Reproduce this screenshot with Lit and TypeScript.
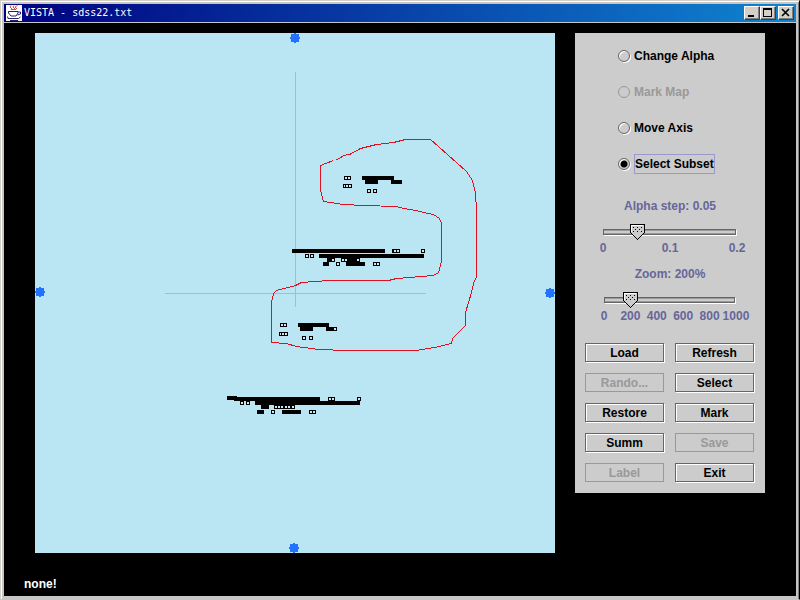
import { LitElement, html, svg, css } from "lit";
import { customElement } from "lit/decorators.js";
import { styleMap } from "lit/directives/style-map.js";

// Solid runs of overlapping points: x, y, width
const RUNS = [
  [362, 176, 32], [365, 180, 13], [391, 180, 11],
  [292, 249, 93], [319, 254, 105], [327, 258, 6], [347, 258, 10],
  [323, 262, 6], [346, 262, 19],
  [298, 323, 31], [300, 327, 13], [326, 327, 8],
  [227, 396, 10], [234, 397, 86], [255, 401, 105], [261, 405, 8],
  [257, 410, 7], [282, 410, 19],
];

// Single points, drawn hollow: x, y
const POINTS = [
  [344, 176], [347, 176], [343, 184], [345, 184], [348, 184], [367, 189], [373, 189],
  [392, 249], [393, 249], [396, 249], [421, 249], [305, 254], [310, 254],
  [331, 258], [341, 258], [344, 258], [356, 258], [336, 262], [373, 262], [376, 262],
  [280, 323], [283, 323], [279, 332], [281, 332], [284, 332], [333, 327],
  [302, 336], [309, 336],
  [328, 397], [331, 397], [357, 397], [240, 401], [246, 401],
  [274, 405], [277, 405], [280, 405], [284, 405], [287, 405], [291, 405],
  [271, 410], [309, 410], [312, 410],
];

const HANDLES = [[295, 38], [40, 292], [550, 293], [294, 548]];

const LASSO =
  "M336 159L339 158L343 155L349 154L360 148L376 144L393 142L405 139H430L447 154L466 171L472 180L475 192L476 210V277L474 280L469 299L465 312V325L452 338L451 343L434 347L415 350H346L318 349L296 346L286 343L271 342V302L273 293L276 290L295 285L301 282L329 280H388L396 278L433 275L438 272L441 261V223L439 218L433 214L423 212L416 210L403 208L396 206L363 205L343 204L323 201L320 190V165L333 160";

@customElement("scatter-plot")
export class ScatterPlot extends LitElement {
  static styles = css`
    :host { display: block; }
    .plot { display: block; width: 100%; height: auto; background: #b9e6f2; }
    .axis { fill: #40ff80; }
    .lasso { fill: none; stroke: #e01020; stroke-width: 1; }
    .point { fill: #c8ecf5; stroke: #000; stroke-width: 1; }
    .handle { fill: #2273ff; }
  `;
  render() {
    return html`<svg class="plot" viewBox="35 33 520 520" role="img" aria-label="Data map" shape-rendering="crispEdges">
      <rect class="axis" x="295" y="72" width="1" height="235" />
      <rect class="axis" x="165" y="293" width="261" height="1" />
      <path class="lasso" transform="translate(.5 .5)" d=${LASSO} />
      ${RUNS.map(([x, y, w]) => svg`<rect x=${x} y=${y} width=${w} height="4" />`)}
      ${POINTS.map(([x, y]) => svg`<rect class="point" x=${x + 0.5} y=${y + 0.5} width="3" height="3" />`)}
      ${HANDLES.map(([x, y]) => svg`<path class="handle" transform="translate(${x} ${y})"
        d="M-4-4H-1V-5H1V-4H4V-1H5V1H4V4H1V5H-1V4H-4V1H-5V-1H-4Z" />`)}
    </svg>`;
  }
}

@customElement("metal-slider")
export class MetalSlider extends LitElement {
  static properties = {
    name: {}, unit: {}, max: { type: Number }, step: { type: Number },
    value: { type: Number }, ticks: { attribute: false },
  };
  declare name: string;
  declare unit: string;
  declare max: number;
  declare step: number;
  declare value: number;
  declare ticks: number[];

  static styles = css`
    :host { display: block; color: #666699; }
    .caption { display: block; text-align: center; line-height: 16px; margin-bottom: 10px; }
    .slider { position: relative; height: 16px; display: flex; align-items: center; }
    .range { appearance: none; width: 100%; height: 16px; margin: 0; background: none; outline: none; }
    .range::-webkit-slider-runnable-track {
      height: 6px; margin-right: 1px; box-sizing: border-box; border: 1px solid #666;
      box-shadow: 1px 1px 0 #fff, inset 0 -1px 0 #999, inset 0 1px 0 #999;
    }
    .range::-webkit-slider-thumb { appearance: none; width: 15px; height: 16px; margin-top: -6px; opacity: 0; }
    .thumb { position: absolute; top: 0; width: 15px; height: 16px; margin-left: -7px; pointer-events: none; }
    .ticks { display: flex; justify-content: space-between; line-height: 16px; }
    .tick { width: 0; display: flex; justify-content: center; }
  `;
  render() {
    return html`
      <label class="caption" for="range">${this.name}: ${this.value}${this.unit}</label>
      <div class="slider">
        <input class="range" id="range" type="range" min="0" max=${this.max} step=${this.step} .value=${String(this.value)}
          @input=${(e: Event) => { this.value = Number((e.target as HTMLInputElement).value); }} />
        <svg class="thumb" style=${styleMap({ left: `${(this.value / this.max) * 100}%` })} viewBox="0 0 15 16" shape-rendering="crispEdges">
          <path d="M1 .5H14L14.5 1V8.5L7.5 15.5L.5 8.5V1Z" fill="#ccc" stroke="#000" />
          <path d="M1.5 8V1.5H13" fill="none" stroke="#fff" />
          <path d="M3 3h1v1h-1zM7 3h1v1h-1zM11 3h1v1h-1zM5 5h1v1h-1zM9 5h1v1h-1zM3 7h1v1h-1zM7 7h1v1h-1zM11 7h1v1h-1z" fill="#000" />
        </svg>
      </div>
      <div class="ticks">${this.ticks.map((t) => html`<span class="tick">${t}</span>`)}</div>`;
  }
}

@customElement("app-root")
export class AppRoot extends LitElement {
  static properties = { mode: { state: true } };
  declare mode: string;
  constructor() {
    super();
    this.mode = "Select Subset";
  }

  static styles = css`
    :host { display: block; font: bold 12px "Liberation Sans", Arial, sans-serif; }
    .window {
      box-sizing: border-box; min-height: 100vh; display: flex; flex-direction: column;
      padding: 3px; background: #c6c6c6; border: 1px solid; border-color: #d4d0c8 #000 #c6c6c6 #d4d0c8;
      box-shadow: inset 1px 1px 0 #fff, inset -1px 0 0 #808080;
    }
    .titlebar {
      display: flex; align-items: center; height: 18px; padding: 0 2px; margin-bottom: 1px;
      background: linear-gradient(90deg, #000080, #1084d0);
    }
    .logo { width: 16px; height: 16px; flex: none; }
    .title { flex: 1; margin: 0 0 0 2px; font: 10px/16px "DejaVu Sans Mono", monospace; color: #fff; white-space: pre; }
    .caption-button {
      box-sizing: border-box; width: 16px; height: 14px; padding: 0; border: 1px solid;
      border-color: #fff #404040 #404040 #fff; background: #d4d0c8; box-shadow: inset -1px -1px 0 #808080;
    }
    .close { margin-left: 2px; }
    .glyph { display: block; width: 14px; height: 12px; fill: none; stroke: #000; }
    .client { flex: 1; background: #000; }
    .workspace { display: flex; align-items: flex-start; gap: 20px; padding: 10px 31px 0; }
    .map { flex: 1; min-width: 0; }
    .panel { box-sizing: border-box; width: 190px; flex: none; padding: 13px 10px 10px; background: #ccc; }
    .modes { display: grid; gap: 16px; margin: 0; padding: 0 0 0 33px; border: 0; }
    .mode { display: flex; align-items: center; gap: 4px; height: 20px; }
    .radio {
      appearance: none; box-sizing: border-box; width: 12px; height: 12px; margin: 0; border: 1px solid #666;
      border-radius: 50%; box-shadow: 1px 1px 0 #fff, inset 1px 1px 0 #fff; outline: none;
    }
    .radio:checked { background: radial-gradient(circle, #000 0 3px, transparent 4px); }
    .radio:disabled { border-color: #999; box-shadow: none; }
    .mode-name { border: 1px solid transparent; line-height: 18px; margin-left: -1px; white-space: nowrap; }
    .radio:checked + .mode-name { border-color: #9999cc; margin-left: 0; }
    .radio:disabled + .mode-name { color: #999; }
    .sliders { display: grid; gap: 10px; padding: 24px 18px 19px; }
    .inner { margin: 0 1px; }
    .actions { display: grid; grid-template-columns: 1fr 1fr; gap: 10px; }
    .action {
      box-sizing: border-box; height: 19px; margin: 0 1px 1px 0; padding: 0; border: 1px solid #666;
      background: #ccc; box-shadow: 1px 1px 0 #fff, inset 1px 1px 0 #fff; font: inherit; line-height: 16px; color: #000;
    }
    .action:disabled { color: #999; border-color: #999; box-shadow: none; }
    .status { margin: 0; padding: 23px 20px 4px; line-height: 16px; color: #fff; }
  `;

  private modeItem(name: string, disabled = false) {
    return html`<label class="mode">
      <input class="radio" type="radio" name="mode" ?disabled=${disabled} .checked=${this.mode === name}
        @change=${() => { this.mode = name; }} /><span class="mode-name">${name}</span></label>`;
  }

  private action(name: string, disabled = false) {
    return html`<button class="action" type="button" ?disabled=${disabled}>${name}</button>`;
  }

  render() {
    return html`<div class="window">
      <header class="titlebar">
        <svg class="logo" viewBox="0 0 16 16" aria-hidden="true">
          <rect width="16" height="16" fill="#fff" />
          <path d="M5 .5L4 2L6 4M8 .5L7 2L9 4M11.5 .5L9 2L11 4M5 4.5H10" fill="none" stroke="#d84848" />
          <path d="M2.5 6.5H12V8L10 11H5L2.5 8ZM12 7H14.5V9L11.5 10M1.5 11.5L2 13.5H12.5L14.5 12M4 15.5H12" fill="none" stroke="#22226c" />
        </svg>
        <h1 class="title">VISTA - sdss22.txt</h1>
        <button class="caption-button" type="button" aria-label="Minimize">
          <svg class="glyph" viewBox="0 0 14 12" shape-rendering="crispEdges"><path d="M3 9H9" stroke-width="2" /></svg>
        </button>
        <button class="caption-button" type="button" aria-label="Maximize">
          <svg class="glyph" viewBox="0 0 14 12" shape-rendering="crispEdges"><path d="M2.5 2V9.5H10.5V2M2 2H11" /><path d="M2 2H11" stroke-width="2" /></svg>
        </button>
        <button class="caption-button close" type="button" aria-label="Close">
          <svg class="glyph" viewBox="0 0 14 12"><path d="M3 2L10 9M10 2L3 9" stroke-width="1.6" /></svg>
        </button>
      </header>
      <div class="client">
        <main class="workspace">
          <scatter-plot class="map"></scatter-plot>
          <aside class="panel">
            <fieldset class="modes" aria-label="Mode">
              ${this.modeItem("Change Alpha")} ${this.modeItem("Mark Map", true)}
              ${this.modeItem("Move Axis")} ${this.modeItem("Select Subset")}
            </fieldset>
            <div class="sliders">
              <metal-slider name="Alpha step" unit="" .max=${0.2} .step=${0.01} .value=${0.05} .ticks=${[0, 0.1, 0.2]}></metal-slider>
              <metal-slider class="inner" name="Zoom" unit="%" .max=${1000} .step=${10} .value=${200} .ticks=${[0, 200, 400, 600, 800, 1000]}></metal-slider>
            </div>
            <div class="actions">
              ${this.action("Load")} ${this.action("Refresh")}
              ${this.action("Rando...", true)} ${this.action("Select")}
              ${this.action("Restore")} ${this.action("Mark")}
              ${this.action("Summ")} ${this.action("Save", true)}
              ${this.action("Label", true)} ${this.action("Exit")}
            </div>
          </aside>
        </main>
        <p class="status">none!</p>
      </div>
    </div>`;
  }
}
